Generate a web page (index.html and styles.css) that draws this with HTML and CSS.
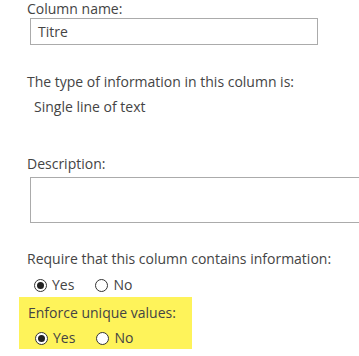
FILE: index.html
```html
<!DOCTYPE html>
<html>
<head>
    <title>Column settings</title>
    <link rel="stylesheet" href="styles.css">
</head>
<body>
<div class="form">
    <div class="label first">Column name:</div>
    <div class="textbox">Titre</div>

    <div class="label info">The type of information in this column is:</div>
    <div class="value">Single line of text</div>

    <div class="label desc">Description:</div>
    <div class="textarea"></div>

    <div class="label require">Require that this column contains information:</div>
    <div class="choices">
        <span class="option"><span class="radio checked"></span>Yes</span>
        <span class="option"><span class="radio"></span>No</span>
    </div>

    <div class="highlight">
        <div class="label">Enforce unique values:</div>
        <div class="choices">
            <span class="option"><span class="radio checked"></span>Yes</span>
            <span class="option"><span class="radio"></span>No</span>
        </div>
    </div>
</div>
</body>
</html>
```

FILE: styles.css
```css
html { overflow: hidden; }
body { margin: 0; background: #ffffff; color: #444444; font-family: "Open Sans", "Noto Sans", sans-serif; font-size: 14px; }
.form { padding: 0 0 0 27px; }
.label { line-height: 20px; white-space: nowrap; }
.first { line-height: 16px; margin-top: 1px; margin-bottom: 1px; }
.textbox { margin: 0 0 0 3px; width: 279px; height: 25px; border: 1px solid #ababab; line-height: 25px; padding: 0 0 0 7px; }
.info { margin-top: 27px; }
.value { margin-top: 5px; line-height: 20px; padding-left: 7px; }
.desc { margin-top: 37px; }
.textarea { margin: 3px 0 0 3px; width: 360px; height: 44px; border: 1px solid #ababab; }
.require { margin-top: 26px; }
.choices { display: flex; align-items: center; gap: 21px; height: 20px; margin-top: 6px; padding-left: 7px; }
.option { display: flex; align-items: center; gap: 5px; line-height: 20px; }
.radio { width: 11px; height: 11px; border: 1px solid #333333; border-radius: 50%; display: flex; align-items: center; justify-content: center; background: #ffffff; }
.radio.checked::after { content: ""; width: 7px; height: 7px; border-radius: 50%; background: #222222; }
.highlight { margin: 2px 0 0 -8px; width: 164px; padding: 6px 0 1px 9px; background: #fef35a; }
.highlight .choices { margin-top: 5px; }
```
